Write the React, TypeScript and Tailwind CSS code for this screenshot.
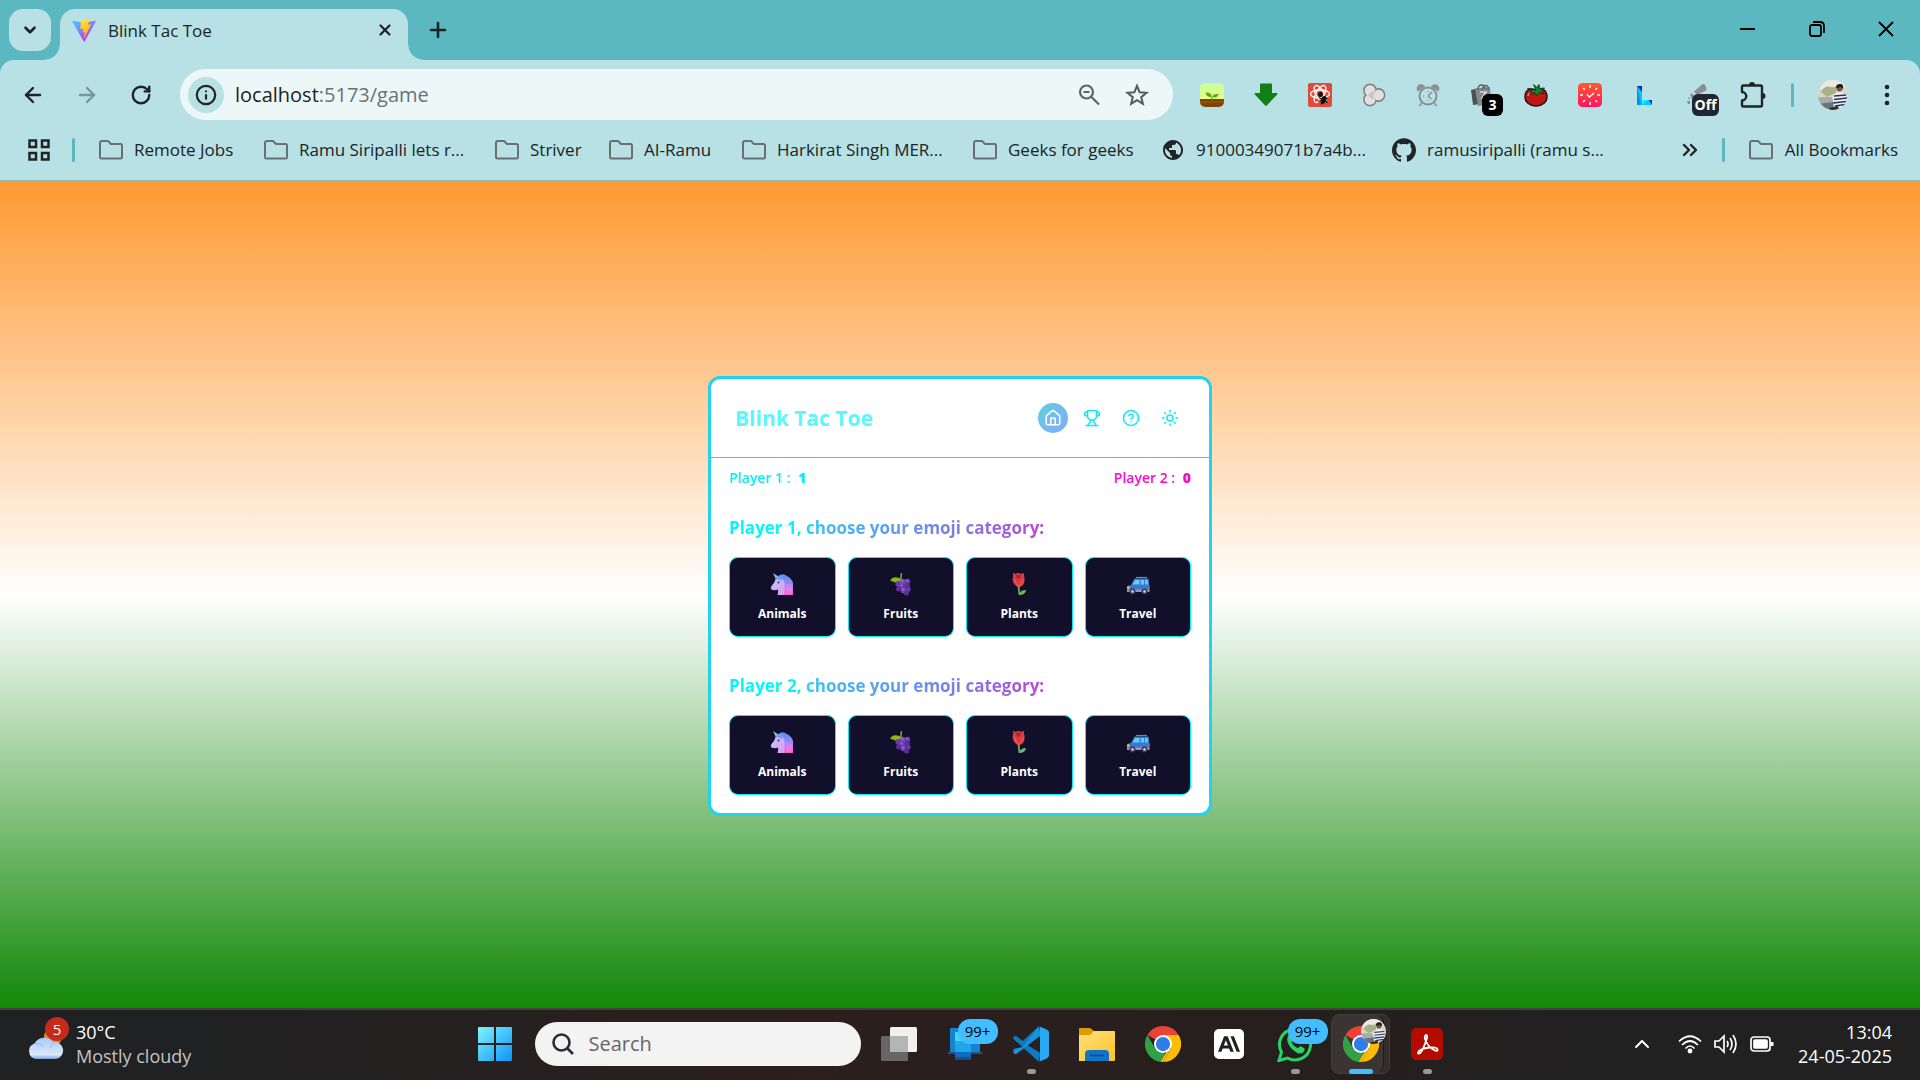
import React, { useState } from "react";
import {
  ArrowLeft,
  ArrowRight,
  ChevronDown,
  ChevronUp,
  ChevronsRight,
  CircleHelp,
  House,
  Info,
  Plus,
  RotateCw,
  Sun,
  Trophy,
  X,
} from "lucide-react";
import { SiAnthropic, SiGithub } from "react-icons/si";
import { MdPublic } from "react-icons/md";

/* ---------- Browser icons ---------- */

function ViteLogo() {
  return (
    <svg viewBox="0 0 32 32" className="size-6" aria-hidden="true">
      <defs>
        <linearGradient id="viteA" x1="0" x2="0.6" y1="0" y2="0.9">
          <stop offset="0" stopColor="#41d1ff" />
          <stop offset="1" stopColor="#bd34fe" />
        </linearGradient>
        <linearGradient id="viteB" x1="0.4" x2="0.6" y1="0" y2="1">
          <stop offset="0" stopColor="#ffea83" />
          <stop offset="0.1" stopColor="#ffdd35" />
          <stop offset="1" stopColor="#ffa800" />
        </linearGradient>
      </defs>
      <path
        fill="url(#viteA)"
        d="M31.5 5 16.9 31a.8.8 0 0 1-1.4 0L.6 5a.8.8 0 0 1 .8-1.200l14.600 2.600h.3l14.300-2.600a.8.8 0 0 1 .9 1.200z"
      />
      <path
        fill="url(#viteB)"
        d="M22.900.9 12.100 3a.4.4 0 0 0-.3.4l-.7 11.200c0 .3.200.500.5.400l3-.7c.3 0 .5.200.500.500l-.9 4.400c0 .3.200.5.500.400l1.900-.5c.3-.1.500.1.500.4l-1.400 6.900c-.1.400.500.7.700.300l.2-.3 8.800-17.500c.1-.2-.1-.6-.5-.5l-3.100.6a.4.4 0 0 1-.4-.5l2-7.100a.4.4 0 0 0-.500-.5z"
      />
    </svg>
  );
}

function FolderIcon() {
  return (
    <svg viewBox="0 0 24 24" className="size-6 shrink-0" fill="none" stroke="#6a6f71" strokeWidth="2" aria-hidden="true">
      <path d="M1 18.500V5Q1 3 3 3h6l3 3h9.500Q23 6 23 7.500v11.500Q23 20.500 21.500 20.500h-19Q1 20.500 1 19z" />
    </svg>
  );
}

function AppsGrid() {
  return (
    <svg viewBox="0 0 22 22" className="size-[22px]" fill="none" stroke="#202426" strokeWidth="2.500" aria-hidden="true">
      <path d="M1.500 1.500h6.500v6.500H1.500zM14 1.500h6.500v6.500H14zM1.500 14h6.500v6.500H1.500zM14 14h6.500v6.500H14z" />
    </svg>
  );
}

function PuzzleIcon() {
  return (
    <svg viewBox="0 0 28 28" className="size-7" fill="none" stroke="#202426" strokeWidth="2.400" aria-hidden="true">
      <path d="M5.500 4.500h17Q24 4.500 24 6v18q0 1.500-1.500 1.500h-17Q4 25.500 4 24v-4.500a4.200 4.200 0 0 0 0-8.500V6q0-1.500 1.500-1.500z" strokeLinejoin="round" />
      <path d="M11 4a3 3 0 0 1 6 0zM24.500 12a3 3 0 0 1 0 6z" fill="#202426" stroke="none" />
    </svg>
  );
}

function ZoomOutIcon() {
  return (
    <svg viewBox="0 0 24 24" className="size-6" fill="none" stroke="#5f6668" strokeWidth="2.200" aria-hidden="true">
      <circle cx="9.500" cy="9" r="6.500" />
      <path d="M6.500 9h6M14.500 14l7.500 7.500" />
    </svg>
  );
}

function StarIcon() {
  return (
    <svg viewBox="0 0 24 24" className="size-6" fill="none" stroke="#54595b" strokeWidth="2" aria-hidden="true">
      <path d="M12 2.800 14.600 9.200 21.500 9.700 16.200 14.200 17.900 20.900 12 17.200 6.100 20.900 7.800 14.200 2.500 9.700 9.400 9.200z" />
    </svg>
  );
}

function ExtPlant() {
  return (
    <svg viewBox="0 0 24 24" className="size-6">
      <defs>
        <linearGradient id="plantBg" x1="0" x2="0" y1="0" y2="1">
          <stop offset="0" stopColor="#c5ff9a" />
          <stop offset="1" stopColor="#fdf97c" />
        </linearGradient>
      </defs>
      <rect width="24" height="24" rx="5" fill="url(#plantBg)" />
      <path d="M0 16h24v3a5 5 0 0 1-5 5H5a5 5 0 0 1-5-5z" fill="#7f4506" />
      <path d="M0 19h24" stroke="#935511" strokeWidth="1.500" />
      <path d="M12 17v-3" stroke="#5da51d" strokeWidth="1.300" />
      <path d="M12 14c-1-4-3-4.500-6.500-4.500C6 13 8.500 14.500 12 14zM12.500 14c.5-3 3-3 6-3-.5 3-3 4-6 3z" fill="#53ad12" />
    </svg>
  );
}

function ExtDownload() {
  return (
    <svg viewBox="0 0 24 24" className="size-6">
      <path d="M6 1.500Q6 .5 7 .5h10q1 0 1 1V10h4.500q1.500.3.700 1.500L12.800 22.500q-.8.8-1.600 0L.8 11.500Q0 10.300 1.500 10H6z" fill="#138014" />
    </svg>
  );
}

function ExtReact() {
  return (
    <svg viewBox="0 0 24 24" className="size-6">
      <rect width="24" height="24" rx="2" fill="#df4b3a" />
      <g fill="none" stroke="#fff" strokeWidth="1.300">
        <ellipse cx="12" cy="11" rx="9.500" ry="4" />
        <ellipse cx="12" cy="11" rx="9.500" ry="4" transform="rotate(60 12 11)" />
        <ellipse cx="12" cy="11" rx="9.500" ry="4" transform="rotate(120 12 11)" />
      </g>
      <g stroke="#111" strokeWidth="1.200" fill="#111">
        <ellipse cx="15.500" cy="17" rx="2" ry="3.600" transform="rotate(20 15.500 17)" />
        <circle cx="12.500" cy="11.500" r="1.800" />
        <path d="M11 14.500l8.500 5M10.500 18.500l9-3.500M13 21.500l4.500-9" fill="none" />
      </g>
    </svg>
  );
}

function ExtCircles() {
  return (
    <svg viewBox="0 0 24 24" className="size-6">
      <g fill="#e9e6e6" stroke="#858080" strokeWidth="1.800">
        <circle cx="8" cy="7.500" r="6" />
        <circle cx="8" cy="16.500" r="6" />
        <circle cx="16.500" cy="12" r="6" />
      </g>
      <g fill="#e2dfdf">
        <circle cx="8" cy="7.500" r="5.300" />
        <circle cx="8" cy="16.500" r="5.300" />
        <circle cx="16.500" cy="12" r="5.300" />
      </g>
      <path d="M6 12q6-6 9-4-5 3-3 8-3 1-6-4z" fill="#c9c5c5" />
    </svg>
  );
}

function ExtClock() {
  return (
    <svg viewBox="0 0 24 24" className="size-6" fill="none" stroke="#8c9092" strokeWidth="2">
      <circle cx="12" cy="13" r="8.500" />
      <path d="M12 13l4-4M12 13l3.500 3M5.500 20l-2 3M18.500 20l2 3" strokeWidth="1.600" />
      <path d="M2 7.500a3.500 3.500 0 0 1 6-4zM22 7.500a3.500 3.500 0 0 0-6-4z" fill="#8c9092" strokeWidth="1.500" />
      <path d="M7 13h1M12 17v1M12 8v1" strokeWidth="1.200" />
    </svg>
  );
}

function ExtBag() {
  return (
    <svg viewBox="0 0 24 24" className="size-6">
      <path d="M1 7l8-2 1 16-7 1z" fill="#4a5153" />
      <path d="M5 5.500 20 4l1 17-13 2z" fill="#83898b" />
      <path d="M8 7q0-5 3.500-5T15 6M12 7q1-5 4-4.500t2 4" fill="none" stroke="#5d6466" strokeWidth="1.400" />
      <path d="M10 9h6l-4 6h5" fill="none" stroke="#d5dcde" strokeWidth="1.700" />
    </svg>
  );
}

function ExtTomato() {
  return (
    <svg viewBox="0 0 24 24" className="size-6">
      <path d="M12 7C5 4 1 8 1 14c0 5.500 5 9 11 9s11-3.500 11-9c0-6-4-10-11-7z" fill="#bf1616" stroke="#280505" strokeWidth="1.300" />
      <path d="M12 7 9.500 1.500l3.500 3 2-3 .5 4 5-.5-3 3 3 3-5-1.500-3 3-2-3-5 2 2-4-4-2z" fill="#168032" stroke="#06240e" strokeWidth=".8" />
      <path d="M4 13q0-2 2-3" stroke="#f3786c" strokeWidth="1.400" fill="none" />
    </svg>
  );
}

function ExtWatch() {
  return (
    <svg viewBox="0 0 24 24" className="size-6">
      <defs>
        <linearGradient id="watchBg" x1="0" x2="0" y1="0" y2="1">
          <stop offset="0" stopColor="#ff5b29" />
          <stop offset="1" stopColor="#ff1460" />
        </linearGradient>
      </defs>
      <rect width="24" height="24" rx="4.500" fill="url(#watchBg)" />
      <path
        d="M12 2v3M12 19v3M2 12h3M19 12h3M5 5l1.800 1.800M17.200 17.200 19 19M5 19l1.800-1.800M17.200 6.800 19 5"
        stroke="#fff"
        strokeWidth="1.500"
      />
      <path d="M9 11.500l2.500 2.500 4.500-4" stroke="#fff" strokeWidth="1.500" fill="none" />
    </svg>
  );
}

function ExtL() {
  return (
    <svg viewBox="0 0 24 24" className="size-6">
      <path d="M5 3h5v14h10v5H5z" fill="#00c8fb" />
      <path d="M5 3v19h4z" fill="#0a8df0" />
      <path d="M5 3h5v6z" fill="#1023cc" />
      <path d="M10 17h6l-6 5z" fill="#19ecf5" />
      <path d="M17 17h3v5z" fill="#1023cc" />
    </svg>
  );
}

function ExtOff() {
  return (
    <svg viewBox="0 0 24 24" className="size-6">
      <path d="M8 8.500 16 1.500q2-1 3 .5l1.500 3.500q.5 2-1.500 2.500L11 12z" fill="#8a8f91" />
      <path d="M6 10l3 4-3 2-2-4zM2 14l2 1-1 2zM1 18l3 0 0 3-2 0z" fill="#8a8f91" />
    </svg>
  );
}

function Avatar({ className }: { className: string }) {
  return (
    <svg viewBox="0 0 30 30" className={className} role="img" aria-label="Profile photo">
      <defs>
        <clipPath id="avatarClip">
          <circle cx="15" cy="15" r="15" />
        </clipPath>
      </defs>
      <g clipPath="url(#avatarClip)">
        <rect width="30" height="30" fill="#d6d8c4" />
        <path d="M0 0h30v6L22 9 14 6 6 10 0 9z" fill="#e9ebe0" />
        <path d="M3 12q4-7 9-5t7-3l-1 9-9 4z" fill="#a9b184" />
        <path d="M0 17l14 0 2 8-16 1z" fill="#a3adb4" />
        <path d="M0 24l15-2 1 8H0z" fill="#69757b" />
        <path d="M15 15q4-4 10-2l4 4-1 9-9 2-4-4z" fill="#eef0f4" />
        <path d="M16 16l12-1M16 19.500l13-1.500M15 23l13-1.500M17 26l10-1.500" stroke="#27345e" strokeWidth="1.500" />
        <circle cx="21.500" cy="8.500" r="3" fill="#7b4f3a" />
        <path d="M18 8q0-4 4-4t3 5l-2-2z" fill="#1d1716" />
        <path d="M11 28l9-2 1 4h-9z" fill="#3b2c29" />
      </g>
    </svg>
  );
}

/* ---------- Emoji drawings ---------- */

function Unicorn() {
  return (
    <svg viewBox="0 0 24 24" className="size-6" role="img" aria-label="Unicorn">
      <defs>
        <linearGradient id="mane" x1="0" x2="0" y1="0" y2="1">
          <stop offset="0" stopColor="#5b8cf5" />
          <stop offset="0.450" stopColor="#8d8cf5" />
          <stop offset="0.750" stopColor="#e573e8" />
          <stop offset="1" stopColor="#f55fd0" />
        </linearGradient>
        <linearGradient id="face" x1="0" x2="1" y1="0" y2="1">
          <stop offset="0" stopColor="#c9c4fa" />
          <stop offset="1" stopColor="#d79df0" />
        </linearGradient>
      </defs>
      <path d="M3 1 8.500 4.500 6 7.500z" fill="#8fbfc4" />
      <path d="M7 5q5-5 10-1 7 3.500 6 11v8H13q3-5-2-9z" fill="url(#mane)" />
      <path d="M6 6.500q4-2.500 7 1 2.500 3.500 1.500 8 .5 4-.5 7.500H7.500q1-3 .5-5.500Q4.500 19 1.500 17.500q-1.500-1.500 0-3.500 3-3 4.500-7.500z" fill="url(#face)" />
      <path d="M5 7.500q2-4 8-3-2 2-1 5-3-3-7-2z" fill="#6f9cf8" />
      <circle cx="8.500" cy="10.500" r="1" fill="#3d2c50" />
      <path d="M17 12q2 5 .5 10M20 12q1.500 5 .5 10" stroke="#fb8df0" strokeWidth=".8" fill="none" />
    </svg>
  );
}

function Grapes() {
  return (
    <svg viewBox="0 0 24 24" className="size-6" role="img" aria-label="Grapes">
      <path d="M13 9 12 5.500 12.500 1" stroke="#7fae17" strokeWidth="1.500" fill="none" />
      <path d="M1 8.500Q4 3.500 10 6q3 1 2.500 3-3 2.500-6 1.500T1 8.500z" fill="#86b816" />
      <g fill="#6b3bab">
        <circle cx="9.500" cy="12" r="3" />
        <circle cx="14" cy="10" r="3" fill="#7847b9" />
        <circle cx="18.500" cy="9.500" r="2.800" />
        <circle cx="18" cy="14" r="3" fill="#5b2f96" />
        <circle cx="13" cy="14.500" r="3" />
        <circle cx="9.500" cy="17" r="2.500" fill="#5b2f96" />
        <circle cx="14.500" cy="18.500" r="2.800" fill="#7847b9" />
        <circle cx="19.500" cy="17.500" r="2.200" />
        <circle cx="17.500" cy="21" r="2.500" fill="#5b2f96" />
      </g>
      <g fill="#9a75d3">
        <circle cx="13.500" cy="9" r=".9" />
        <circle cx="18" cy="8.500" r=".9" />
        <circle cx="12.500" cy="13.500" r=".9" />
        <circle cx="14" cy="17.500" r=".9" />
      </g>
    </svg>
  );
}

function Rose() {
  return (
    <svg viewBox="0 0 24 24" className="size-6" role="img" aria-label="Rose">
      <path d="M11.500 14 12.500 23" stroke="#66ae5d" strokeWidth="1.800" fill="none" />
      <path d="M12 23q1-5 7-5-.5 5-7 5z" fill="#6fb565" />
      <path d="M6 1q2 0 2.500 1 3-2 5.500 0 1-1 3-1-.3 2 .5 5 .5 5-1.500 7-4 4-8 0-2-2-2.500-6Q6.500 4 6 1z" fill="#dc3b40" />
      <path d="M8.500 2q3 2 5.500 0l-1 4q-2 2-3.500 0z" fill="#ad2530" />
      <path d="M7 7q2 5 5 8Q15 12 16.500 7" fill="none" stroke="#ef6260" strokeWidth="1" />
    </svg>
  );
}

function Car() {
  return (
    <svg viewBox="0 0 24 24" className="size-6" role="img" aria-label="Car">
      <path d="M10 5.500h11" stroke="#7a8494" strokeWidth="1.200" />
      <path d="M5 13 8.500 6.500h13q1.500 0 1.500 2l.5 10H1v-3.500Q2 13 5 13z" fill="#3a77cf" />
      <path d="M6.500 12.500 9 8h4.500v4.500zM14.800 8h3.200v4.500h-3.200zM19 8h2.500l.5 4.500h-3z" fill="#5fd0f2" />
      <path d="M1 17.500h22.500v2.500H1z" fill="#9b93b8" />
      <circle cx="6.500" cy="19.500" r="3" fill="#3d3450" />
      <circle cx="18.500" cy="19.500" r="3" fill="#3d3450" />
      <circle cx="6.500" cy="19.500" r="1.400" fill="#c9c4d8" />
      <circle cx="18.500" cy="19.500" r="1.400" fill="#c9c4d8" />
      <circle cx="2.200" cy="15.500" r="1.200" fill="#ffd34f" />
      <path d="M22.500 13.500h1.300v3h-1.300z" fill="#f0413d" />
    </svg>
  );
}

/* ---------- Taskbar icons ---------- */

function ChromeLogo() {
  return (
    <svg viewBox="0 0 48 48" className="size-9" aria-hidden="true">
      <path d="M24 24 3.200 12A24 24 0 0 1 44.800 12z" fill="#ea4335" />
      <path d="M24 12h20.800A24 24 0 0 1 24 48l10.400-18z" fill="#fbbc04" />
      <path d="M3.200 12 13.600 30 24 36l3 .6L24 48A24 24 0 0 1 3.200 12z" fill="#34a046" />
      <path d="M34.400 30 24 48a24 24 0 0 1-3-.2L29 34z" fill="#fbbc04" />
      <circle cx="24" cy="24" r="12" fill="#fff" />
      <circle cx="24" cy="24" r="9.500" fill="#2f7de9" />
    </svg>
  );
}

function WindowsLogo() {
  return (
    <svg viewBox="0 0 36 36" className="size-9" aria-hidden="true">
      <defs>
        <linearGradient id="win" x1="0" x2="1" y1="0" y2="1">
          <stop offset="0" stopColor="#7ff3fd" />
          <stop offset="1" stopColor="#0c93fb" />
        </linearGradient>
      </defs>
      <path fill="url(#win)" d="M1 2q0-1 1-1h15v16H1zM19 1h15q1 0 1 1v15H19zM1 19h16v16H2q-1 0-1-1zM19 19h16v15q0 1-1 1H19z" />
    </svg>
  );
}

function TaskViewIcon() {
  return (
    <svg viewBox="0 0 36 36" className="size-9" aria-hidden="true">
      <rect x="9" y="1" width="27" height="25" rx="1.500" fill="#f0f0f0" />
      <rect x="0" y="10" width="27" height="25" rx="1.500" fill="#666" />
      <path d="M9 10h18v16H9z" fill="#b5b5b5" />
    </svg>
  );
}

function PhoneLinkIcon() {
  return (
    <svg viewBox="0 0 36 36" className="size-9" aria-hidden="true">
      <path d="M3 3q0-1 1-1h28q1 0 1 1v24H3z" fill="#1583cf" />
      <path d="M1 26h34v2H1z" fill="#155394" />
      <path d="M8 6h16v26q0 2-1.500 2h-13Q8 34 8 33z" fill="#22a6ea" />
      <path d="M8 6h16v9H8z" fill="#42d6fb" />
      <path d="M8 26h16v5H8z" fill="#0d6cc2" />
      <path d="M8 31h16v3H8z" fill="#104f8c" />
    </svg>
  );
}

function VsCodeIcon() {
  return (
    <svg viewBox="0 0 100 100" className="size-9" aria-hidden="true">
      <path d="M72 1 27 42 9 28q-2-1.500-4 0L1.500 31.500q-2 2 0 4.500L72 99l3-25-40-24 40-24z" fill="#0c7bc4" />
      <path d="M1.500 64 27 58 72 1l4 26L9 78q-2 1.500-4 0L1.500 74q-2-3 0-6z" fill="#1793d8" />
      <path d="M72 1 94 10q6 3 6 8v64q0 5-6 8L72 99q3-1 3-5V6q0-4-3-5z" fill="#29a9f2" />
    </svg>
  );
}

function ExplorerIcon() {
  return (
    <svg viewBox="0 0 36 36" className="size-9" aria-hidden="true">
      <defs>
        <linearGradient id="fold" x1="0" x2="1" y1="0" y2="1">
          <stop offset="0" stopColor="#ffe07c" />
          <stop offset="1" stopColor="#fcc329" />
        </linearGradient>
      </defs>
      <path d="M0 3q0-1 1-1h10l4 3v4H0z" fill="#dd9c06" />
      <path d="M0 9h11l4-4h20q1 0 1 1v28q0 1-1 1H0z" fill="url(#fold)" />
      <path d="M6 35V28q0-4 4-4h16q4 0 4 4v7z" fill="#1273c8" />
      <path d="M11 29.500h14" stroke="#0a4f95" strokeWidth="1.500" />
    </svg>
  );
}

function AnthropicTile() {
  return (
    <span className="grid size-[30px] place-items-center rounded-[5px] bg-white text-[#20201f]">
      <SiAnthropic className="size-[22px]" aria-hidden="true" />
    </span>
  );
}

function WhatsAppIcon() {
  return (
    <svg viewBox="0 0 36 36" className="size-9" fill="none" aria-hidden="true">
      <path d="M2 34.500 4.500 26A15.500 15.500 0 1 1 10.500 32z" stroke="#25d366" strokeWidth="3" />
      <path
        d="M11 10q2-2 3.500 0l1.500 3.500q.3 1-1.500 3 2 4 6.500 5.800 1.500-2.300 2.500-2l4 2q.6 3.500-3 5Q20 28.500 14 22 8.500 15 11 10z"
        fill="#25d366"
      />
    </svg>
  );
}

function AcrobatIcon() {
  return (
    <svg viewBox="0 0 36 36" className="size-9" aria-hidden="true">
      <rect x="2" y="2" width="32" height="32" rx="5" fill="#b30b00" />
      <path
        d="M17 9q-2.500 1 0 6.500T25 24q4 2 3.500-.5t-7.500-2-11 3.500q-2 2.500 0 2.500t4.500-6 3.500-9.500q.3-3.500-1-3z"
        fill="none"
        stroke="#fff"
        strokeWidth="1.800"
      />
    </svg>
  );
}

function WeatherIcon() {
  return (
    <svg viewBox="0 0 36 36" className="size-9" aria-hidden="true">
      <defs>
        <linearGradient id="cloud" x1="0" x2="0" y1="0" y2="1">
          <stop offset="0" stopColor="#a9c9fb" />
          <stop offset="0.800" stopColor="#dce8fb" />
          <stop offset="1" stopColor="#7aa4ea" />
        </linearGradient>
      </defs>
      <circle cx="25" cy="11" r="9" fill="#f08a19" />
      <path
        d="M8 33a8 8 0 0 1-1.500-15.500A11 11 0 0 1 25 16a8.500 8.500 0 0 1 3 17z"
        fill="url(#cloud)"
      />
      <path d="M6.500 17.500q5-.5 9 3M22 22q2-5 5-5.500" fill="none" stroke="#8fb4f2" strokeWidth="1" />
    </svg>
  );
}

/* ---------- Browser chrome ---------- */

const bookmarks = [
  { label: "Remote Jobs", width: "w-[165px]" },
  { label: "Ramu Siripalli lets r...", width: "w-[231px]" },
  { label: "Striver", width: "w-[114px]" },
  { label: "AI-Ramu", width: "w-[133px]" },
  { label: "Harkirat Singh MER...", width: "w-[231px]" },
  { label: "Geeks for geeks", width: "w-[189px]" },
  { label: "91000349071b7a4b...", width: "w-[230px]", icon: "globe" },
  { label: "ramusiripalli (ramu s...", width: "w-[230px]", icon: "github" },
];

const extensions = [
  { name: "Plant", icon: <ExtPlant /> },
  { name: "Download", icon: <ExtDownload /> },
  { name: "React tools", icon: <ExtReact /> },
  { name: "Circles", icon: <ExtCircles /> },
  { name: "Clock", icon: <ExtClock /> },
  { name: "Bags", icon: <ExtBag />, badge: "3" },
  { name: "Tomato timer", icon: <ExtTomato /> },
  { name: "Stopwatch", icon: <ExtWatch /> },
  { name: "L", icon: <ExtL /> },
  { name: "Highlighter", icon: <ExtOff />, badge: "Off" },
];

function TabStrip() {
  return (
    <div className="flex h-[60px] items-start pl-[9px]">
      <button aria-label="Search tabs" className="mt-[9px] grid size-[42px] place-items-center rounded-[14px] bg-[#b7e1e4]">
        <ChevronDown className="size-[18px]" strokeWidth={3.500} />
      </button>
      <div className="relative ml-[9px] mt-[9px] flex h-[51px] w-[348px] items-center rounded-t-[15px] bg-[#b7e1e4] pb-[9px] pl-3 pr-[14px] before:absolute before:-left-[15px] before:bottom-0 before:size-[15px] before:bg-[radial-gradient(circle_at_top_left,transparent_14px,#b7e1e4_15px)] after:absolute after:-right-[15px] after:bottom-0 after:size-[15px] after:bg-[radial-gradient(circle_at_top_right,transparent_14px,#b7e1e4_15px)]">
        <ViteLogo />
        <span className="ml-3 mt-[2px] flex-1 text-[17px] leading-6">Blink Tac Toe</span>
        <button aria-label="Close tab">
          <X className="size-[18px]" strokeWidth={3} />
        </button>
      </div>
      <button aria-label="New tab" className="ml-[18px] mt-[18px]">
        <Plus className="size-6" strokeWidth={2.600} />
      </button>
      <div className="ml-auto flex h-[58px] text-black">
        <button aria-label="Minimize" className="grid w-[69px] place-items-center">
          <span className="h-[2px] w-[15px] bg-black" />
        </button>
        <button aria-label="Restore" className="grid w-[69px] place-items-center">
          <svg viewBox="0 0 16 16" className="size-4" fill="none" stroke="currentColor" strokeWidth="1.800">
            <rect x="1" y="4" width="11" height="11" rx="2" />
            <path d="M4 1h7q4 0 4 4v7" />
          </svg>
        </button>
        <button aria-label="Close window" className="grid w-[69px] place-items-center">
          <svg viewBox="0 0 16 16" className="size-4" fill="none" stroke="currentColor" strokeWidth="1.800">
            <path d="M1 1l14 14M15 1 1 15" />
          </svg>
        </button>
      </div>
    </div>
  );
}

function Toolbar() {
  return (
    <div className="flex h-[60px] items-end">
      <nav className="flex h-[51px] w-[180px] items-center pl-[6px]">
        <button aria-label="Back" className="grid w-[54px] place-items-center">
          <ArrowLeft className="size-6" strokeWidth={2.400} />
        </button>
        <button aria-label="Forward" className="grid w-[54px] place-items-center text-[#76979b]">
          <ArrowRight className="size-6" strokeWidth={2.400} />
        </button>
        <button aria-label="Reload" className="grid w-[54px] place-items-center">
          <RotateCw className="size-[22px]" strokeWidth={2.600} />
        </button>
      </nav>
      <div className="flex h-[51px] flex-1 items-center rounded-full bg-[#ecf8f8] pl-2 pr-6">
        <button aria-label="Site information" className="grid size-9 place-items-center rounded-full bg-[#b7e1e4]">
          <Info className="size-[22px]" strokeWidth={2.400} />
        </button>
        <div className="ml-[11px] flex-1 text-[20px] leading-7 text-[#6a7274]">
          <span className="text-[#1d2123]">localhost</span>:5173/game
        </div>
        <button aria-label="Zoom" className="mr-6">
          <ZoomOutIcon />
        </button>
        <button aria-label="Bookmark this page">
          <StarIcon />
        </button>
      </div>
      <div className="flex h-[51px] items-center pl-3">
        {extensions.map((e) => (
          <button key={e.name} aria-label={e.name} className="relative grid h-9 w-[54px] place-items-center">
            {e.icon}
            {e.badge === "3" && (
              <span className="absolute -bottom-[3px] right-[6px] grid h-[22px] w-[21px] place-items-center rounded-[6px] bg-black text-[14px] font-bold leading-5 text-white">
                3
              </span>
            )}
            {e.badge === "Off" && (
              <span className="absolute -bottom-[3px] right-[6px] grid h-[22px] w-[27px] place-items-center rounded-[6px] bg-[#202733] text-[14px] font-bold leading-5 text-white">
                Off
              </span>
            )}
          </button>
        ))}
        <button aria-label="Extensions" className="grid w-[54px] place-items-center">
          <PuzzleIcon />
        </button>
        <span className="ml-3 h-6 w-[3px] rounded-full bg-[#5bb8c1]" />
        <button aria-label="Profile" className="ml-6">
          <Avatar className="size-[30px]" />
        </button>
        <button aria-label="Menu" className="ml-[18px] mr-[12px] grid w-[42px] place-items-center">
          <svg viewBox="0 0 6 24" className="h-6 w-[6px]" fill="currentColor">
            <circle cx="3" cy="4" r="2.300" />
            <circle cx="3" cy="12" r="2.300" />
            <circle cx="3" cy="20" r="2.300" />
          </svg>
        </button>
      </div>
    </div>
  );
}

function BookmarksBar() {
  return (
    <div className="flex h-[60px] items-center pl-7 pr-[22px] text-[17px] leading-6">
      <button aria-label="Apps">
        <AppsGrid />
      </button>
      <span className="ml-[22px] mr-[24px] h-6 w-[3px] rounded-full bg-[#5bb8c1]" />
      {bookmarks.map((b) => (
        <a key={b.label} href="#" className={b.width + " flex shrink-0 items-center gap-[11px] whitespace-nowrap"}>
          {b.icon === "globe" ? (
            <MdPublic className="-ml-[1px] size-6 shrink-0" />
          ) : b.icon === "github" ? (
            <SiGithub className="size-6 shrink-0" />
          ) : (
            <FolderIcon />
          )}
          <span>{b.label}</span>
        </a>
      ))}
      <button aria-label="More bookmarks" className="ml-auto">
        <ChevronsRight className="size-6" strokeWidth={2.400} />
      </button>
      <span className="ml-5 mr-6 h-6 w-[3px] rounded-full bg-[#5bb8c1]" />
      <button className="flex items-center gap-3">
        <FolderIcon />
        All Bookmarks
      </button>
    </div>
  );
}

/* ---------- Game ---------- */

const categories = [
  { label: "Animals", icon: <Unicorn /> },
  { label: "Fruits", icon: <Grapes /> },
  { label: "Plants", icon: <Rose /> },
  { label: "Travel", icon: <Car /> },
];

function CategoryPicker({ player }: { player: number }) {
  return (
    <section>
      <h2 className="w-fit bg-[linear-gradient(90deg,#00f6ff_20%,#3fc0f2_28%,#6a90ea_60%,#b84bd2)] bg-clip-text text-[17px] font-bold leading-7 text-transparent">
        Player {player}, choose your emoji category:
      </h2>
      <div className="mt-[15px] grid grid-cols-4 gap-3">
        {categories.map((c) => (
          <button
            key={c.label}
            className="flex h-20 flex-col items-center rounded-[9px] border border-[#00f0ff] bg-[#120f2b] pt-[14px] text-white"
          >
            {c.icon}
            <span className="mt-2 text-[12px] font-bold leading-5">{c.label}</span>
          </button>
        ))}
      </div>
    </section>
  );
}

function GameCard() {
  return (
    <div className="w-[504px] rounded-xl border-[3px] border-[#22d3ee] bg-white">
      <header className="flex h-[79px] items-center border-b border-[#14dcee] px-6">
        <h1 className="flex-1 text-[21px] font-bold leading-8 text-[#5cf6ff]">Blink Tac Toe</h1>
        <nav className="flex gap-[9px] text-[#0ceaf8]">
          <button aria-label="Home" className="grid size-[30px] place-items-center rounded-full bg-linear-to-br from-[#5ccfe0] to-[#82a8fa] text-white">
            <House className="size-[18px]" />
          </button>
          <button aria-label="Leaderboard" className="grid size-[30px] place-items-center">
            <Trophy className="size-[18px]" />
          </button>
          <button aria-label="Help" className="grid size-[30px] place-items-center">
            <CircleHelp className="size-[18px]" />
          </button>
          <button aria-label="Theme" className="grid size-[30px] place-items-center">
            <Sun className="size-[18px]" />
          </button>
        </nav>
      </header>
      <div className="px-[18px] pb-[18px] pt-2">
        <div className="flex justify-between text-[14px] font-semibold leading-6">
          <p className="text-[#08ecf8]">
            Player 1 : <b className="ml-1">1</b>
          </p>
          <p className="text-[#f80cc4]">
            Player 2 : <b className="ml-1">0</b>
          </p>
        </div>
        <div className="mt-6 flex flex-col gap-[35px]">
          <CategoryPicker player={1} />
          <CategoryPicker player={2} />
        </div>
      </div>
    </div>
  );
}

/* ---------- Taskbar ---------- */

const apps = [
  { name: "Task View", icon: <TaskViewIcon /> },
  { name: "Phone Link", icon: <PhoneLinkIcon />, badge: "99+" },
  { name: "Visual Studio Code", icon: <VsCodeIcon />, running: true },
  { name: "File Explorer", icon: <ExplorerIcon /> },
  { name: "Chrome", icon: <ChromeLogo /> },
  { name: "Anthropic", icon: <AnthropicTile /> },
  { name: "WhatsApp", icon: <WhatsAppIcon />, badge: "99+", running: true },
  { name: "Chrome, profile window", icon: <ChromeLogo />, active: true },
  { name: "Acrobat", icon: <AcrobatIcon />, running: true },
];

function Taskbar() {
  const [query, setQuery] = useState("");
  return (
    <footer className="flex h-[72px] items-center border-t-2 border-[#454141] bg-[linear-gradient(90deg,#202122_10%,#2c1f1e_42%,#251f1e_70%,#212122_85%)] px-7 pb-[2px] text-white">
      <div className="flex flex-1">
        <button className="flex items-center text-left text-[18px] leading-6">
          <span className="relative">
            <WeatherIcon />
            <span className="absolute -top-[9px] left-[17px] grid size-6 place-items-center rounded-full bg-[#c42b1c] text-[15px] leading-6">
              5
            </span>
          </span>
          <span className="ml-3">
            30°C
            <span className="block text-[#c4c4c4]">Mostly cloudy</span>
          </span>
        </button>
      </div>
      <div className="ml-4 flex items-center">
        <button aria-label="Start">
          <WindowsLogo />
        </button>
        <label className="ml-[22px] flex h-11 w-[326px] items-center rounded-full bg-[#f3f3f3] pl-4">
          <svg viewBox="0 0 24 24" className="size-6" fill="none" stroke="#2b2e30" strokeWidth="2.600" aria-hidden="true">
            <circle cx="10.500" cy="10.500" r="8" />
            <path d="M16 16l6 6" />
          </svg>
          <input
            aria-label="Search"
            placeholder="Search"
            value={query}
            onChange={(e) => setQuery(e.target.value)}
            className="ml-[14px] w-60 bg-transparent text-[20px] leading-7 text-black outline-none placeholder:text-[#666]"
          />
        </label>
        <div className="ml-[5px] flex">
          {apps.map((a) => (
            <button
              key={a.name}
              aria-label={a.name}
              className="relative grid h-[60px] w-[66px] place-items-center"
            >
              {a.active && (
                <span className="absolute left-[3px] top-0 h-full w-[59px] rounded-lg border border-[#423c3b] bg-[#332d2c]">
                  <span className="block h-full w-[52px] rounded-lg border-r border-[#1f1b1a] bg-[#3a3433]" />
                </span>
              )}
              <span className="relative">{a.icon}</span>
              {a.badge && (
                <span className="absolute left-[26px] top-[5px] h-[25px] w-10 rounded-[12px] bg-[#42bdff] text-center text-[15px] leading-6 text-black">
                  {a.badge}
                </span>
              )}
              {a.active && (
                <span className="absolute left-[33px] top-[5px]">
                  <Avatar className="size-[25px]" />
                </span>
              )}
              {a.running && <span className="absolute bottom-0 left-[29px] h-[5px] w-[9px] rounded-full bg-[#9a9796]" />}
              {a.active && <span className="absolute bottom-0 left-[21px] h-[5px] w-6 rounded-full bg-[#42bdff]" />}
            </button>
          ))}
        </div>
      </div>
      <div className="flex flex-1 items-center justify-end">
        <button aria-label="Show hidden icons">
          <ChevronUp className="size-6" />
        </button>
        <button aria-label="Network, volume and battery" className="ml-6 flex gap-3">
          <svg viewBox="0 0 24 24" className="size-6" fill="none" stroke="currentColor" strokeWidth="1.700">
            <path d="M1 9.500q11-10.500 22 0M4 13q8-8 16 0M7.500 16.500q4.500-5 9 0" />
            <circle cx="12" cy="19" r="1.600" fill="currentColor" />
          </svg>
          <svg viewBox="0 0 24 24" className="size-6" fill="none" stroke="currentColor" strokeWidth="1.700">
            <path d="M1 9h4l5-5v16l-5-5H1zM13 9q2 3 0 6M16 6q4 6 0 12M19 3q6 9 0 18" />
          </svg>
          <svg viewBox="0 0 24 24" className="size-6" fill="none" stroke="currentColor" strokeWidth="1.700">
            <rect x="1" y="5" width="19" height="14" rx="3" />
            <rect x="4" y="8" width="13" height="8" rx="1" fill="currentColor" />
            <path d="M22 10v4" strokeWidth="3" />
          </svg>
        </button>
        <time className="ml-6 text-right text-[18px] leading-6">
          13:04
          <span className="block">24-05-2025</span>
        </time>
      </div>
    </footer>
  );
}

export default function App() {
  return (
    <div className="flex min-h-screen flex-col bg-[#5bb8c1] font-['Open_Sans','Noto_Sans',sans-serif] text-[#202426]">
      <TabStrip />
      <div className="rounded-t-[14px] border-b-2 border-[#92b8bb] bg-[#b7e1e4]">
        <Toolbar />
        <BookmarksBar />
      </div>
      <main className="grid flex-1 place-items-center bg-[linear-gradient(#ff9933,#ffffff,#138808)] pt-[2px]">
        <GameCard />
      </main>
      <Taskbar />
    </div>
  );
}
